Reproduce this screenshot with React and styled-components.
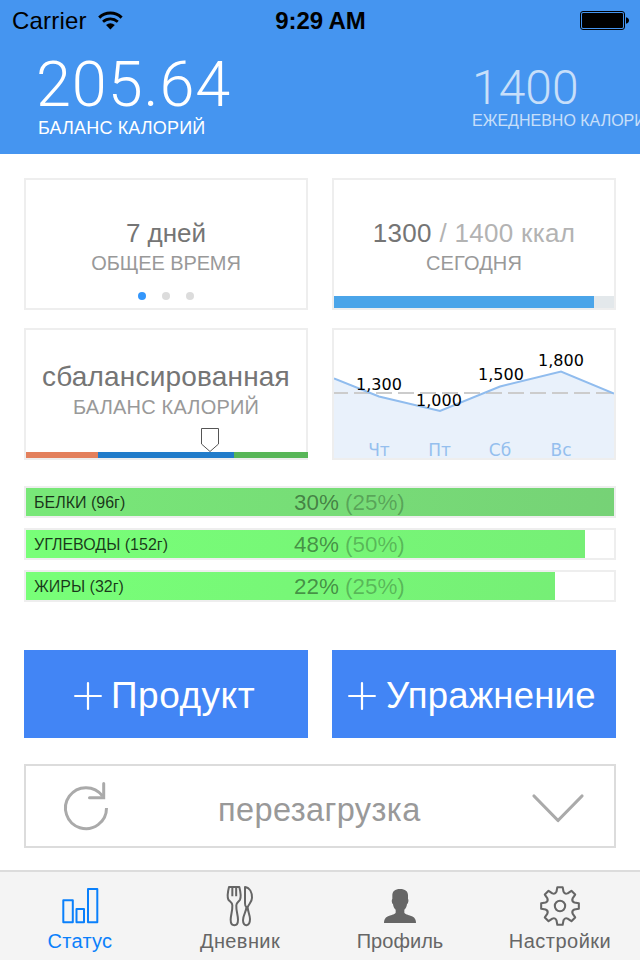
import React from "react";
import styled, { createGlobalStyle } from "styled-components";

const GlobalStyle = createGlobalStyle`
  * { box-sizing: border-box; }
  body {
    margin: 0;
    background: #fff;
    font-family: "Liberation Sans", Arial, sans-serif;
    -webkit-font-smoothing: antialiased;
  }
`;

const Screen = styled.div`
  width: 640px;
  height: 960px;
  display: flex;
  flex-direction: column;
  overflow: hidden;
  background: #fff;
`;

const Label = styled.span`
  display: block;
  flex: none;
  white-space: pre;
  font-size: ${(p) => p.$size}px;
  line-height: ${(p) => p.$line}px;
  letter-spacing: ${(p) => p.$track || 0}px;
  color: ${(p) => p.$color || "inherit"};
`;

/* Header */

const Header = styled.header`
  flex: none;
  height: 154px;
  background: #4595f0;
  color: #fff;
  overflow: hidden;
`;

const StatusBar = styled.div`
  display: grid;
  grid-template-columns: 1fr auto 1fr;
  align-items: center;
  height: 42px;
  padding: 0 11px 0 12px;
  color: #000;
`;

const Carrier = styled.div`
  display: flex;
  align-items: center;
  gap: 11px;
  font-size: 24px;
  letter-spacing: 0.2px;
`;

const Clock = styled.div`
  font-size: 24px;
  font-weight: 700;
  letter-spacing: -0.1px;
`;

const BatterySlot = styled.div`
  display: flex;
  justify-content: flex-end;
`;

const Metrics = styled.div`
  display: flex;
  align-items: flex-start;
  padding-left: 38px;
`;

const Metric = styled.div`
  flex: none;
  width: ${(p) => p.$width}px;
  padding-top: ${(p) => p.$top}px;
  opacity: ${(p) => p.$opacity || 1};
`;

const MetricValue = styled.div`
  font-family: Roboto, "Liberation Sans", sans-serif;
  font-weight: 300;
  font-size: ${(p) => p.$size}px;
  line-height: ${(p) => p.$line}px;
  letter-spacing: ${(p) => p.$track}px;
  margin: 0 0 ${(p) => p.$gap}px ${(p) => p.$shift}px;
  white-space: nowrap;
`;

/* Cards */

const Content = styled.main`
  flex: 1;
  display: flex;
  flex-direction: column;
  padding: 24px 24px 0;
`;

const Cards = styled.section`
  display: grid;
  grid-template-columns: 284px 284px;
  grid-auto-rows: 132px;
  column-gap: 24px;
  row-gap: 18px;
`;

const Card = styled.article`
  display: flex;
  flex-direction: column;
  align-items: center;
  border: 2px solid #eee;
  padding-top: ${(p) => p.$top || 0}px;
  color: #999;
`;

const Strong = styled.span`
  color: #757575;
`;

const Faint = styled.span`
  color: #b3b3b3;
`;

const Dots = styled.div`
  display: flex;
  gap: 16px;
  margin-top: 14px;
`;

const Dot = styled.i`
  width: 8px;
  height: 8px;
  border-radius: 50%;
  background: ${(p) => (p.$active ? "#3396fb" : "#dcdcdc")};
`;

const Progress = styled.div`
  align-self: stretch;
  height: 12px;
  margin-top: auto;
  background: #e3e8eb;
`;

const ProgressFill = styled.div`
  width: ${(p) => p.$width}px;
  height: 100%;
  background: #4ba5e9;
`;

const Scale = styled.div`
  align-self: flex-start;
  display: flex;
  width: 282px;
  height: 6px;
`;

const ScalePart = styled.i`
  width: ${(p) => p.$width}px;
  background: ${(p) => p.$color};
`;

const Marker = styled.svg`
  display: block;
  align-self: flex-start;
  margin: 6px 0 0 174px;
`;

const Chart = styled.svg`
  display: block;
  font-family: "DejaVu Sans", Verdana, sans-serif;
`;

/* Macronutrients */

const Macros = styled.section`
  display: flex;
  flex-direction: column;
  gap: 10px;
  margin-top: 26px;
`;

const Macro = styled.div`
  display: grid;
  grid-template-columns: 260px 1fr;
  align-items: center;
  height: 32px;
  padding-left: 8px;
  border: 2px solid #eee;
  background: linear-gradient(100deg, ${(p) => p.$from}, ${(p) => p.$to}) 0 0 / ${(p) => p.$fill}px 28px no-repeat;
`;

const MacroName = styled.span`
  padding-top: 2px;
  font-size: 16px;
  line-height: 26px;
  color: rgba(0, 0, 0, 0.78);
`;

const MacroShare = styled.span`
  padding-top: 2px;
  font-size: 22.4px;
  line-height: 26px;
  color: rgba(0, 0, 0, 0.43);
`;

const MacroTarget = styled.span`
  color: rgba(0, 0, 0, 0.26);
`;

/* Actions */

const Actions = styled.section`
  display: grid;
  grid-template-columns: 284px 284px;
  gap: 24px;
  margin-top: 48px;
`;

const ActionButton = styled.button`
  display: flex;
  align-items: center;
  gap: ${(p) => p.$gap}px;
  height: 88px;
  padding: 3px 0 0 ${(p) => p.$left}px;
  border: 0;
  background: #4285f5;
  color: #fff;
  font-family: inherit;
  svg { flex: none; margin-top: 1px; }
`;

const Reload = styled.button`
  display: grid;
  grid-template-columns: 190px 1fr 86px;
  align-items: start;
  height: 84px;
  margin-top: 26px;
  padding: 0;
  border: 2px solid #dcdcdc;
  background: #fff;
  color: #999;
  text-align: left;
  font-family: inherit;
  svg { display: block; }
`;

const ReloadText = styled(Label)`
  margin-top: 24px;
  padding-left: 2px;
`;

const ReloadIcon = styled.svg`
  margin: 13px 0 0 34px;
`;

const ChevronIcon = styled.svg`
  margin: 26px 0 0 3px;
`;

/* Tabs */

const TabBar = styled.nav`
  flex: none;
  display: grid;
  grid-template-columns: repeat(4, 1fr);
  height: 90px;
  border-top: 2px solid #dcdcdc;
  background: #f4f4f4;
`;

const Tab = styled.a`
  display: flex;
  flex-direction: column;
  align-items: center;
  padding-top: 12px;
  color: ${(p) => (p.$active ? "#0a80fb" : "#666")};
  svg { display: block; margin-bottom: 1px; }
`;

const WifiIcon = () => (
  <svg width="25" height="20" viewBox="0 0 25 20" fill="none" stroke="#000">
    <path d="M1.2 6.6 C7.5 .6 17.3 .6 23.6 6.6" strokeWidth="3" />
    <path d="M5 10.8 C9.4 6.9 15.4 6.9 19.8 10.8" strokeWidth="2.8" />
    <path d="M8 14 Q12.4 10.7 16.8 14 L12.4 18.6Z" fill="#000" stroke="none" />
  </svg>
);

const BatteryIcon = () => (
  <svg width="49" height="20" viewBox="0 0 49 20">
    <rect x=".5" y=".5" width="44" height="18" rx="2.5" fill="none" stroke="#000" />
    <rect x="2" y="2" width="41" height="15" rx="1.2" />
    <path d="M46 6.2c4 .6 4 6 0 6.600z" />
  </svg>
);

const PlusIcon = () => (
  <svg width="28" height="28" viewBox="0 0 28 28" fill="none" stroke="#fff" strokeWidth="2.2" strokeLinecap="round">
    <path d="M14 1.100V26.900M1.100 14H26.900" />
  </svg>
);

const StatsIcon = () => (
  <svg width="44" height="44" viewBox="0 0 44 44" fill="none" stroke="currentColor" strokeWidth="2" strokeLinejoin="round">
    <rect x="5.300" y="16.300" width="9.500" height="22" />
    <rect x="18.500" y="25" width="7.500" height="13.300" />
    <rect x="30" y="5" width="9.300" height="33.300" />
  </svg>
);

const CutleryIcon = () => (
  <svg width="44" height="44" viewBox="654 72 132 132" fill="none" stroke="currentColor" strokeWidth="6" strokeLinejoin="round">
    <path d="M687 81 C683 97 682 112 685 119 C690 126 697 127 697 136 C698 152 692 165 692 179 C692 201 714 201 714 179 C714 165 708 152 709 136 C709 127 716 126 720 119 C723 112 722 97 718 81 Z" />
    <path d="M697 82V109M708.500 82V109" />
    <path d="M735 81 C750 83 756 99 756 113 C756 127 745 133 743 142 C743 153 750 165 750 177 C750 200 729 202 729 181 C729 165 740 154 739 141 C735 139 735 137 735 130 Z" />
  </svg>
);

const ProfileIcon = () => (
  <svg width="44" height="44" viewBox="174 72 132 132" fill="currentColor">
    <path d="M240 87 C256 87 264 94 264 106 V116 C267 120 265 129 261 133 C260 141 257 146 253 149 V158 C257 164 269 165 276 169 C286 174 288 181 288 189 H192 C192 181 194 174 204 169 C211 165 223 164 227 158 V149 C223 146 220 141 219 133 C215 129 214 120 217 116 V106 C217 94 225 87 240 87Z" />
  </svg>
);

const gearTooth = (index) => {
  const turn = (index * Math.PI) / 4;
  const at = (x, y) => {
    const px = x * Math.cos(turn) - y * Math.sin(turn);
    const py = x * Math.sin(turn) + y * Math.cos(turn);
    return `${px.toFixed(2)} ${py.toFixed(2)}`;
  };
  return `${index ? "L" : "M"}${at(-10.500, -43)} L${at(-8, -56.500)} L${at(8, -56.500)} L${at(10.500, -43)} Q${at(14, -34.500)} ${at(22.900, -37.800)}`;
};

const gearPath = [0, 1, 2, 3, 4, 5, 6, 7].map(gearTooth).join(" ") + "Z";

const SettingsIcon = () => (
  <svg width="44" height="44" viewBox="-66 -66 132 132" fill="none" stroke="currentColor" strokeWidth="6.200" strokeLinejoin="round">
    <path d={gearPath} />
    <circle r="15.500" />
  </svg>
);

const TABS = [
  { name: "Статус", Icon: StatsIcon, track: 0.26, active: true },
  { name: "Дневник", Icon: CutleryIcon, track: 0.4 },
  { name: "Профиль", Icon: ProfileIcon, track: 0.05 },
  { name: "Настройки", Icon: SettingsIcon, track: 0.5 },
];

const MACROS = [
  { name: "БЕЛКИ (96г)", share: "30%", target: "(25%)", fill: 588, from: "#78e878", to: "#76d276" },
  { name: "УГЛЕВОДЫ (152г)", share: "48%", target: "(50%)", fill: 559, from: "#78ff78", to: "#76ef76" },
  { name: "ЖИРЫ (32г)", share: "22%", target: "(25%)", fill: 529, from: "#78ff78", to: "#76ef76" },
];

const POINTS = "0,48.500 45,66.500 106,81 166,56.500 227,41.500 280,63.500";

const CalorieChart = () => (
  <Chart width="280" height="128" viewBox="0 0 280 128">
    <polygon points={`0,128 ${POINTS} 280,128`} fill="#e9f1fb" />
    <path d="M0 63H280" stroke="#ccc" strokeWidth="2" strokeDasharray="16 6" strokeDashoffset="2" />
    <polyline points={POINTS} fill="none" stroke="#90bcee" strokeWidth="2" />
    <g fontSize="16" fill="#000">
      <text x="22" y="60">1,300</text>
      <text x="82" y="76">1,000</text>
      <text x="144" y="50">1,500</text>
      <text x="204" y="36">1,800</text>
    </g>
    <g fontSize="17" fill="#95bfee" textAnchor="middle">
      <text x="45" y="126">Чт</text>
      <text x="105.500" y="126">Пт</text>
      <text x="166" y="126">Сб</text>
      <text x="227" y="126">Вс</text>
    </g>
  </Chart>
);

export default function App() {
  return (
    <Screen>
      <GlobalStyle />
      <Header>
        <StatusBar>
          <Carrier>
            Carrier
            <WifiIcon />
          </Carrier>
          <Clock>9:29 AM</Clock>
          <BatterySlot>
            <BatteryIcon />
          </BatterySlot>
        </StatusBar>
        <Metrics>
          <Metric $width={434} $top={12}>
            <MetricValue $size={63} $line={62} $track={0.9} $gap={2} $shift={-2}>205.64</MetricValue>
            <Label $size={18} $line={20} $track={0.15}>БАЛАНС КАЛОРИЙ</Label>
          </Metric>
          <Metric $width={200} $top={22} $opacity={0.7}>
            <MetricValue $size={48} $line={48} $track={0} $gap={-1} $shift={0}>1400</MetricValue>
            <Label $size={16} $line={20}>ЕЖЕДНЕВНО КАЛОРИИ</Label>
          </Metric>
        </Metrics>
      </Header>

      <Content>
        <Cards>
          <Card $top={38}>
            <Label $size={26} $line={30}><Strong>7 дней</Strong></Label>
            <Label $size={20} $line={30} $track={-0.12}>ОБЩЕЕ ВРЕМЯ</Label>
            <Dots>
              <Dot $active />
              <Dot />
              <Dot />
            </Dots>
          </Card>
          <Card $top={38}>
            <Label $size={26} $line={30} $track={0.3}>
              <Strong>1300</Strong><Faint> / 1400 ккал</Faint>
            </Label>
            <Label $size={20} $line={30} $track={0.15}>СЕГОДНЯ</Label>
            <Progress>
              <ProgressFill $width={260} />
            </Progress>
          </Card>
          <Card $top={32}>
            <Label $size={28} $line={30} $track={0.18}><Strong>сбалансированная</Strong></Label>
            <Label $size={20} $line={30} $track={0.18}>БАЛАНС КАЛОРИЙ</Label>
            <Marker width="20" height="24" viewBox="0 0 20 24" fill="#fff" stroke="#555">
              <path d="M1.500 .5H18.500V16L10 23.500L1.500 16Z" />
            </Marker>
            <Scale>
              <ScalePart $width={72} $color="#e3805c" />
              <ScalePart $width={136} $color="#217cca" />
              <ScalePart $width={74} $color="#58b658" />
            </Scale>
          </Card>
          <Card>
            <CalorieChart />
          </Card>
        </Cards>

        <Macros>
          {MACROS.map((m) => (
            <Macro key={m.name} $from={m.from} $to={m.to} $fill={m.fill}>
              <MacroName>{m.name}</MacroName>
              <MacroShare>
                {m.share} <MacroTarget>{m.target}</MacroTarget>
              </MacroShare>
            </Macro>
          ))}
        </Macros>

        <Actions>
          <ActionButton $left={50} $gap={9}>
            <PlusIcon />
            <Label $size={37} $line={40} $track={0.5}>Продукт</Label>
          </ActionButton>
          <ActionButton $left={16} $gap={10}>
            <PlusIcon />
            <Label $size={36.5} $line={40} $track={0.2}>Упражнение</Label>
          </ActionButton>
        </Actions>

        <Reload>
          <ReloadIcon width="52" height="54" viewBox="60 779 52 54" fill="none" stroke="#aaa" strokeWidth="3">
            <path d="M106.500 808A20.500 20.500 0 1 1 102.500 796" />
            <path d="M103.700 783.500V797.700H89.500" strokeLinecap="round" />
          </ReloadIcon>
          <ReloadText $size={32.5} $line={40} $track={0.4}>перезагрузка</ReloadText>
          <ChevronIcon width="54" height="32" viewBox="531 792 54 32" fill="none" stroke="#aaa" strokeWidth="3.200" strokeLinecap="round" strokeLinejoin="round">
            <path d="M534 796L558 820.500L582 796" />
          </ChevronIcon>
        </Reload>
      </Content>

      <TabBar>
        {TABS.map(({ name, Icon, track, active }) => (
          <Tab key={name} $active={active}>
            <Icon />
            <Label $size={20} $line={24} $track={track}>{name}</Label>
          </Tab>
        ))}
      </TabBar>
    </Screen>
  );
}
